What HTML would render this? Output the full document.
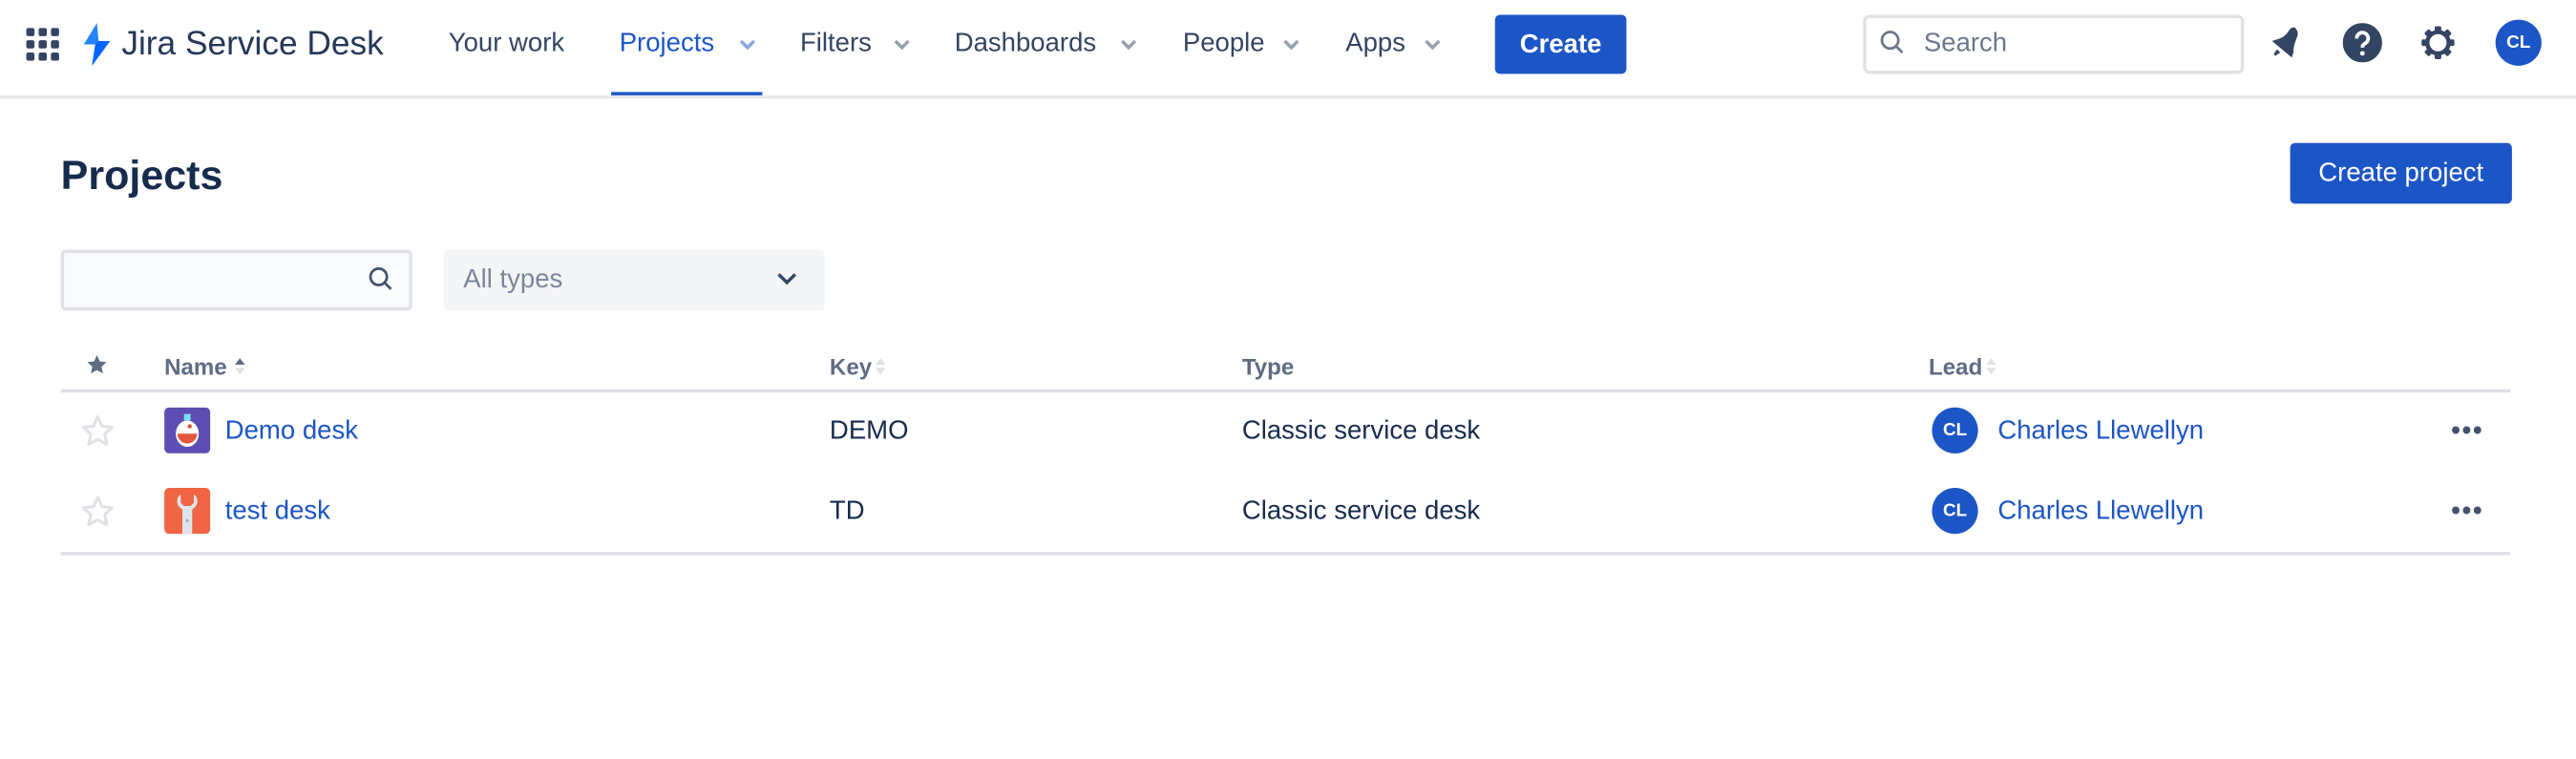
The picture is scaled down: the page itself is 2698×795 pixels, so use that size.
<!DOCTYPE html>
<html><head><meta charset="utf-8"><style>
html,body{margin:0;padding:0;background:#fff;overflow:hidden;width:2698px;height:794px}
#w{position:absolute;left:0;top:0;width:1568px;height:462px;transform:scale(1.72066);transform-origin:0 0;font-family:"Liberation Sans",sans-serif;color:#172B4D}
.a{position:absolute;white-space:nowrap}
.nav{font-size:16px;color:#344563;top:18px;font-weight:500}
.chev{position:absolute;top:22px}
.th{font-size:14px;font-weight:bold;color:#5E6C84;top:215px}
.td{font-size:16px;top:254px}
.blue{color:#1C55C6}
.av{position:absolute;width:28px;height:28px;border-radius:50%;background:#1C55C6;color:#fff;font-size:11px;font-weight:bold;text-align:center;line-height:28px}
.line{position:absolute;left:37px;width:1491px;height:2px;background:#DFE1E6}
</style></head><body><div id="w">
<svg class="a" style="left:16px;top:17px" width="20" height="20" viewBox="0 0 20 20" fill="#344563">
<rect x="0" y="0" width="5" height="5" rx="1.2"/><rect x="7.5" y="0" width="5" height="5" rx="1.2"/><rect x="15" y="0" width="5" height="5" rx="1.2"/>
<rect x="0" y="7.5" width="5" height="5" rx="1.2"/><rect x="7.5" y="7.5" width="5" height="5" rx="1.2"/><rect x="15" y="7.5" width="5" height="5" rx="1.2"/>
<rect x="0" y="15" width="5" height="5" rx="1.2"/><rect x="7.5" y="15" width="5" height="5" rx="1.2"/><rect x="15" y="15" width="5" height="5" rx="1.2"/></svg>
<svg class="a" style="left:50px;top:14px" width="18" height="26" viewBox="0 0 18 26"><path d="M9 0 L1 13 H8 L6 26 L17 11 H10 Z" fill="#2684FF"/><path d="M8 13 L6 26 L17 11 H10 Z" fill="#0065FF"/></svg>
<div class="a" style="left:74px;top:15px;font-size:20.5px;color:#253858">Jira Service Desk</div>
<div class="a nav" style="left:273px">Your work</div>
<div class="a nav" style="left:377px;color:#1C55C6">Projects</div>
<div class="a" style="left:372px;top:56px;width:92px;height:3px;background:#1C55C6"></div>
<div class="a nav" style="left:487px">Filters</div>
<div class="a nav" style="left:581px">Dashboards</div>
<div class="a nav" style="left:720px">People</div>
<div class="a nav" style="left:819px">Apps</div>
<svg class="chev" style="left:449px" width="12" height="10" viewBox="0 0 12 10"><path d="M2 3l4 4 4-4" stroke="#8ba6de" stroke-width="2" fill="none"/></svg>
<svg class="chev" style="left:543px" width="12" height="10" viewBox="0 0 12 10"><path d="M2 3l4 4 4-4" stroke="#97A0AF" stroke-width="2" fill="none"/></svg>
<svg class="chev" style="left:681px" width="12" height="10" viewBox="0 0 12 10"><path d="M2 3l4 4 4-4" stroke="#97A0AF" stroke-width="2" fill="none"/></svg>
<svg class="chev" style="left:780px" width="12" height="10" viewBox="0 0 12 10"><path d="M2 3l4 4 4-4" stroke="#97A0AF" stroke-width="2" fill="none"/></svg>
<svg class="chev" style="left:866px" width="12" height="10" viewBox="0 0 12 10"><path d="M2 3l4 4 4-4" stroke="#97A0AF" stroke-width="2" fill="none"/></svg>
<div class="a" style="left:910px;top:9px;width:80px;height:36px;background:#1C55C6;border-radius:3px;color:#fff;font-size:16px;font-weight:bold;text-align:center;line-height:37px">Create</div>
<div class="a" style="left:1134px;top:9px;width:228px;height:32px;border:2px solid #DFE1E6;border-radius:4px"></div>
<svg class="a" style="left:1144px;top:18px" width="16" height="16" viewBox="0 0 16 16"><circle cx="6.5" cy="6.5" r="5" stroke="#6B778C" stroke-width="1.6" fill="none"/><path d="M10 10l4 4" stroke="#6B778C" stroke-width="1.6"/></svg>
<div class="a" style="left:1171px;top:18px;font-size:16px;color:#6B778C">Search</div>
<svg class="a" style="left:1380px;top:14px" width="24" height="24" viewBox="0 0 24 24"><path d="M17 3c2 2 2 4 1 6-1 3-2 5-2 9l-1 3L3 11l3-1c3-1 5-2 7-5 1-2 3-3 4-2z" fill="#344563"/><path d="M6 16l-2 3 1 1 3-2z" fill="#344563"/></svg>
<svg class="a" style="left:1426px;top:14px" width="24" height="24" viewBox="0 0 24 24"><circle cx="12" cy="12" r="12" fill="#344563"/><path d="M8.5 9.5a3.5 3.5 0 1 1 5 3c-1 .6-1.5 1-1.5 2.5" stroke="#fff" stroke-width="2.2" fill="none"/><circle cx="12" cy="18.5" r="1.4" fill="#fff"/></svg>
<svg class="a" style="left:1472px;top:14px" width="24" height="24" viewBox="0 0 24 24"><g fill="#344563"><rect x="10" y="2" width="4" height="4" rx="1"/><rect x="10" y="18" width="4" height="4" rx="1"/><rect x="2" y="10" width="4" height="4" rx="1"/><rect x="18" y="10" width="4" height="4" rx="1"/><rect x="10" y="2" width="4" height="4" rx="1" transform="rotate(45 12 12)"/><rect x="10" y="18" width="4" height="4" rx="1" transform="rotate(45 12 12)"/><rect x="10" y="2" width="4" height="4" rx="1" transform="rotate(-45 12 12)"/><rect x="10" y="18" width="4" height="4" rx="1" transform="rotate(-45 12 12)"/></g><circle cx="12" cy="12" r="6.5" fill="none" stroke="#344563" stroke-width="2.6"/></svg>
<div class="av" style="left:1519px;top:12px">CL</div>
<div class="a" style="left:0;top:58px;width:1568px;height:2px;background:#E5E7EB"></div>
<div class="a" style="left:37px;top:93px;font-size:25px;font-weight:bold;color:#172B4D">Projects</div>
<div class="a" style="left:1394px;top:87px;width:135px;height:37px;background:#1C55C6;border-radius:3px;color:#fff;font-size:16px;text-align:center;line-height:38px">Create project</div>
<div class="a" style="left:37px;top:152px;width:210px;height:33px;border:2px solid #DFE1E6;border-radius:3px;background:#FAFBFC"></div>
<svg class="a" style="left:224px;top:162px" width="16" height="16" viewBox="0 0 16 16"><circle cx="6.5" cy="6.5" r="5" stroke="#42526E" stroke-width="1.6" fill="none"/><path d="M10 10l4 4" stroke="#42526E" stroke-width="1.6"/></svg>
<div class="a" style="left:270px;top:152px;width:232px;height:37px;background:#F4F5F7;border-radius:3px"></div>
<div class="a" style="left:282px;top:162px;font-size:16px;color:#7A869A">All types</div>
<svg class="a" style="left:471px;top:163px" width="16" height="14" viewBox="0 0 16 14"><path d="M3 4l5 5 5-5" stroke="#344563" stroke-width="2" fill="none"/></svg>
<svg class="a" style="left:52px;top:215px" width="14" height="14" viewBox="0 0 24 24"><path d="M12 2l3 6.5 7 .8-5.2 4.8 1.5 7L12 17.6 5.7 21.1l1.5-7L2 9.3l7-.8z" fill="#5E6C84"/></svg>
<div class="a th" style="left:100px">Name</div>
<div class="a th" style="left:505px">Key</div>
<div class="a th" style="left:756px">Type</div>
<div class="a th" style="left:1174px">Lead</div>
<svg class="a" style="left:142px;top:217px" width="8" height="12" viewBox="0 0 8 12"><path d="M1 5l3-4 3 4z" fill="#5E6C84"/><path d="M1 7l3 4 3-4z" fill="#DFE1E6"/></svg>
<svg class="a" style="left:532px;top:217px" width="8" height="12" viewBox="0 0 8 12"><path d="M1 5l3-4 3 4z" fill="#DFE1E6"/><path d="M1 7l3 4 3-4z" fill="#DFE1E6"/></svg>
<svg class="a" style="left:1208px;top:217px" width="8" height="12" viewBox="0 0 8 12"><path d="M1 5l3-4 3 4z" fill="#DFE1E6"/><path d="M1 7l3 4 3-4z" fill="#DFE1E6"/></svg>
<div class="line" style="top:237px"></div>
<svg class="a" style="left:49px;top:252px" width="21" height="21" viewBox="0 0 24 24"><path d="M12 2l3 6.5 7 .8-5.2 4.8 1.5 7L12 17.6 5.7 21.1l1.5-7L2 9.3l7-.8z" fill="none" stroke="#DFE1E6" stroke-width="2" stroke-linejoin="round"/></svg>
<svg class="a" style="left:100px;top:248px" width="28" height="28" viewBox="0 0 28 28"><rect width="28" height="28" rx="3" fill="#5E4DB2"/><rect x="12" y="4" width="4" height="4" fill="#79E2F2"/><ellipse cx="14" cy="16" rx="7" ry="8" fill="#fff"/><path d="M8 16h12a6 6 0 0 1-12 0z" fill="#E2583E"/><circle cx="15.5" cy="11.5" r="1.3" fill="#E2583E"/></svg>
<div class="a td blue" style="left:137px">Demo desk</div>
<div class="a td" style="left:505px">DEMO</div>
<div class="a td" style="left:756px">Classic service desk</div>
<div class="av" style="left:1176px;top:248px">CL</div>
<div class="a td blue" style="left:1216px">Charles Llewellyn</div>
<div class="a" style="left:1492px;top:254px;font-size:16px;color:#42526E;font-weight:bold;letter-spacing:1px">•••</div>
<svg class="a" style="left:49px;top:301px" width="21" height="21" viewBox="0 0 24 24"><path d="M12 2l3 6.5 7 .8-5.2 4.8 1.5 7L12 17.6 5.7 21.1l1.5-7L2 9.3l7-.8z" fill="none" stroke="#DFE1E6" stroke-width="2" stroke-linejoin="round"/></svg>
<svg class="a" style="left:100px;top:297px" width="28" height="28" viewBox="0 0 28 28"><rect width="28" height="28" rx="3" fill="#F06543"/><path d="M10 4c-3 2-3 7 1 9v15h6V13c4-2 4-7 1-9v5l-2 2h-4l-2-2z" fill="#DFE4EA"/><circle cx="14" cy="20" r="1" fill="#A5ADBA"/></svg>
<div class="a td blue" style="left:137px;top:303px">test desk</div>
<div class="a td" style="left:505px;top:303px">TD</div>
<div class="a td" style="left:756px;top:303px">Classic service desk</div>
<div class="av" style="left:1176px;top:297px">CL</div>
<div class="a td blue" style="left:1216px;top:303px">Charles Llewellyn</div>
<div class="a" style="left:1492px;top:303px;font-size:16px;color:#42526E;font-weight:bold;letter-spacing:1px">•••</div>
<div class="line" style="top:336px"></div>
</div></body></html>
